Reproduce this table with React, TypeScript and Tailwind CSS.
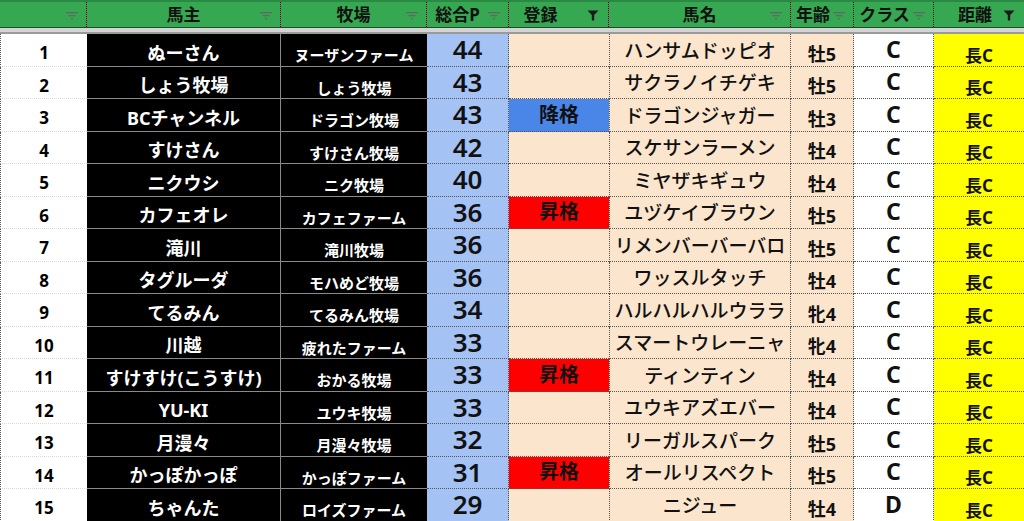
import React from "react";

type Row = {
  no: number;
  owner: string;
  farm: string;
  pts: number;
  reg?: "up" | "down";
  horse: string;
  age: string;
  cls: string;
  dist: string;
};

const rows: Row[] = [
  { no: 1, owner: "ぬーさん", farm: "ヌーザンファーム", pts: 44, horse: "ハンサムドッピオ", age: "牡5", cls: "C", dist: "長C" },
  { no: 2, owner: "しょう牧場", farm: "しょう牧場", pts: 43, horse: "サクラノイチゲキ", age: "牡5", cls: "C", dist: "長C" },
  { no: 3, owner: "BCチャンネル", farm: "ドラゴン牧場", pts: 43, reg: "down", horse: "ドラゴンジャガー", age: "牡3", cls: "C", dist: "長C" },
  { no: 4, owner: "すけさん", farm: "すけさん牧場", pts: 42, horse: "スケサンラーメン", age: "牡4", cls: "C", dist: "長C" },
  { no: 5, owner: "ニクウシ", farm: "ニク牧場", pts: 40, horse: "ミヤザキギュウ", age: "牡4", cls: "C", dist: "長C" },
  { no: 6, owner: "カフェオレ", farm: "カフェファーム", pts: 36, reg: "up", horse: "ユヅケイブラウン", age: "牡5", cls: "C", dist: "長C" },
  { no: 7, owner: "滝川", farm: "滝川牧場", pts: 36, horse: "リメンバーバーバロ", age: "牡5", cls: "C", dist: "長C" },
  { no: 8, owner: "タグルーダ", farm: "モハめど牧場", pts: 36, horse: "ワッスルタッチ", age: "牡4", cls: "C", dist: "長C" },
  { no: 9, owner: "てるみん", farm: "てるみん牧場", pts: 34, horse: "ハルハルハルウララ", age: "牝4", cls: "C", dist: "長C" },
  { no: 10, owner: "川越", farm: "疲れたファーム", pts: 33, horse: "スマートウレーニャ", age: "牝4", cls: "C", dist: "長C" },
  { no: 11, owner: "すけすけ(こうすけ)", farm: "おかる牧場", pts: 33, reg: "up", horse: "ティンティン", age: "牡4", cls: "C", dist: "長C" },
  { no: 12, owner: "YU-KI", farm: "ユウキ牧場", pts: 33, horse: "ユウキアズエバー", age: "牡4", cls: "C", dist: "長C" },
  { no: 13, owner: "月漫々", farm: "月漫々牧場", pts: 32, horse: "リーガルスパーク", age: "牡5", cls: "C", dist: "長C" },
  { no: 14, owner: "かっぽかっぽ", farm: "かっぽファーム", pts: 31, reg: "up", horse: "オールリスペクト", age: "牡5", cls: "C", dist: "長C" },
  { no: 15, owner: "ちゃんた", farm: "ロイズファーム", pts: 29, horse: "ニジュー", age: "牡4", cls: "D", dist: "長C" },
];

const font = { fontFamily: '"Noto Sans", "Noto Sans CJK JP", sans-serif' };

function FilterIcon({ active }: { active?: boolean }) {
  if (active) {
    return (
      <svg width="12" height="11" viewBox="0 0 12 11" className="absolute right-[9px] bottom-[6px]">
        <path d="M0.5 0.5 H11.5 L7.2 5 V10.5 H4.8 V5 Z" fill="#1a1a1a" />
      </svg>
    );
  }
  return (
    <svg width="12" height="8" viewBox="0 0 12 8" className="absolute right-[8px] bottom-[7px]">
      <rect x="0" y="0" width="12" height="1.3" fill="#5b6b5e" />
      <rect x="2.5" y="3" width="7" height="1.3" fill="#5b6b5e" />
      <rect x="5" y="6" width="2" height="1.3" fill="#5b6b5e" />
    </svg>
  );
}

const headers: { label: string; w: string; active?: boolean; pr?: string }[] = [
  { label: "", w: "w-[87px]" },
  { label: "馬主", w: "w-[194px]" },
  { label: "牧場", w: "w-[146px]" },
  { label: "総合P", w: "w-[82px]", pr: "pr-[20px]" },
  { label: "登録", w: "w-[100px]", active: true, pr: "pr-[36px]" },
  { label: "馬名", w: "w-[182px]" },
  { label: "年齢", w: "w-[63px]", pr: "pr-[18px]" },
  { label: "クラス", w: "w-[80px]", pr: "pr-[18px]" },
  { label: "距離", w: "w-[90px]", active: true, pr: "pr-[8px]" },
];

function RegCell({ reg }: { reg?: "up" | "down" }) {
  const bg = reg === "up" ? "bg-[#ff0000]" : reg === "down" ? "bg-[#4a86e8]" : "bg-[#fce5cd]";
  return (
    <div className={`w-[100px] h-full flex items-center justify-center border-b border-dotted border-[#555] ${bg}`}>
      {reg && (
        <span className="text-[20px] font-bold text-[#111] leading-none">{reg === "up" ? "昇格" : "降格"}</span>
      )}
    </div>
  );
}

export default function App() {
  return (
    <div className="w-[1024px] h-[521px] overflow-hidden bg-white text-black" style={font}>
      {/* Header */}
      <div className="flex h-[28px] bg-[#36a852] border-t-2 border-[#2a8a43] border-b border-b-[#1e4d2b]">
        {headers.map((h, i) => (
          <div
            key={i}
            className={`relative ${h.w} h-full flex items-center justify-center ${h.pr ?? ""} ${
              i < headers.length - 1 ? "border-r border-dotted border-[#111]" : ""
            }`}
          >
            <span className="text-[17px] font-bold leading-none text-[#111]">{h.label}</span>
            <FilterIcon active={h.active} />
          </div>
        ))}
      </div>
      <div className="h-[4px] bg-[#d4d4d4]" />
      <div className="h-[2px] bg-[#9a9a9a]" />

      {/* Body */}
      {rows.map((r) => (
        <div key={r.no} className="flex h-[32.5px]">
          <div className="w-[87px] h-full flex items-center justify-center pt-[6px] border-l border-dotted border-l-[#555] border-b border-b-[#dadada] bg-white">
            <span className="text-[17px] font-bold leading-none">{r.no}</span>
          </div>
          <div className="w-[194px] h-full flex items-center justify-center pt-[6px] bg-black border-r border-b border-[#8a8a8a]">
            <span className="text-[18px] font-bold leading-none text-white whitespace-nowrap">{r.owner}</span>
          </div>
          <div className="w-[146px] h-full flex items-center justify-center pt-[12px] bg-black border-b border-[#8a8a8a]">
            <span className="text-[15px] font-bold leading-none text-white whitespace-nowrap">{r.farm}</span>
          </div>
          <div className="w-[82px] h-full flex items-center justify-center pb-[1px] bg-[#a4c2f4] border-b border-r border-dotted border-[#555]">
            <span className="text-[26px] font-semibold leading-none text-[#111]">{r.pts}</span>
          </div>
          <RegCell reg={r.reg} />
          <div className="w-[182px] h-full flex items-center justify-center pt-[3px] bg-[#fce5cd] border-l border-r border-b border-dotted border-[#555]">
            <span className="text-[19px] font-medium leading-none text-[#111] whitespace-nowrap">{r.horse}</span>
          </div>
          <div className="w-[63px] h-full flex items-center justify-center pt-[8px] bg-[#fce5cd] border-r border-b border-dotted border-[#555]">
            <span className="text-[18px] font-bold leading-none text-[#111]">{r.age}</span>
          </div>
          <div className="w-[80px] h-full flex items-center justify-center pb-[1px] bg-white border-r border-b border-dotted border-[#555]">
            <span className="text-[23px] font-bold leading-none text-[#111]">{r.cls}</span>
          </div>
          <div className="w-[90px] h-full flex items-center justify-center pt-[11px] bg-[#ffff00] border-b border-dotted border-[#555]">
            <span className="text-[17px] font-bold leading-none text-[#111]">{r.dist}</span>
          </div>
        </div>
      ))}
    </div>
  );
}
